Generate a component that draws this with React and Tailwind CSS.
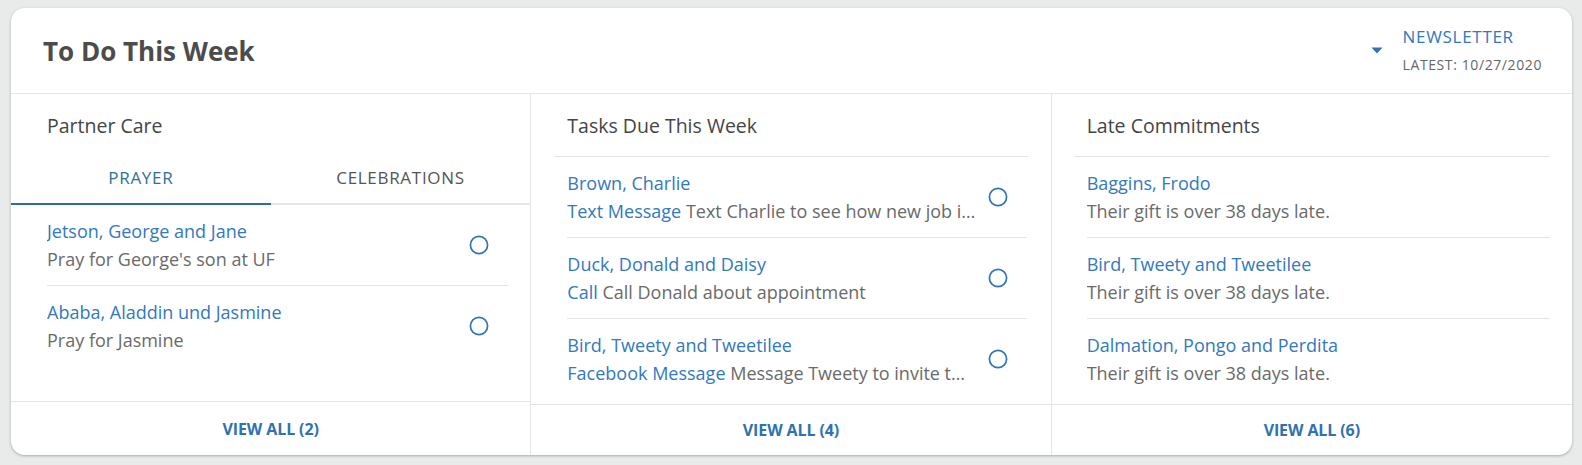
import React from 'react';

const FONT = { fontFamily: '"Open Sans", Lato, sans-serif' };

const prayers = [
  { name: 'Jetson, George and Jane', note: "Pray for George's son at UF" },
  { name: 'Ababa, Aladdin und Jasmine', note: 'Pray for Jasmine' },
];

const tasks = [
  { name: 'Brown, Charlie', kind: 'Text Message', note: 'Text Charlie to see how new job is going this week' },
  { name: 'Duck, Donald and Daisy', kind: 'Call', note: 'Call Donald about appointment' },
  { name: 'Bird, Tweety and Tweetilee', kind: 'Facebook Message', note: 'Message Tweety to invite to dinner next week' },
];

const late = [
  { name: 'Baggins, Frodo' },
  { name: 'Bird, Tweety and Tweetilee' },
  { name: 'Dalmation, Pongo and Perdita' },
];

const Circle = () => (
  <svg width="20" height="20" viewBox="0 0 20 20" className="shrink-0">
    <circle cx="10" cy="10" r="8.6" fill="none" stroke="#2f74b5" strokeWidth="1.7" />
  </svg>
);

const ViewAll = ({ count, className }) => (
  <div className={`flex items-center justify-center border-t border-[#e4e4e4] ${className}`}>
    <span className="text-[16px] font-bold text-[#2f72b0] tracking-[-0.1px]">VIEW ALL ({count})</span>
  </div>
);

const Row = ({ name, children, check, last }) => (
  <div className={`flex items-center gap-3 pt-3 pb-3 pr-[19px] ${last ? '' : 'border-b border-[#e4e4e4]'}`}>
    <div className="min-w-0 flex-1">
      <div className="text-[18px] leading-[28px] text-[#3279bd] truncate">{name}</div>
      <div className="text-[18px] leading-[28px] text-[#6a6a6a] truncate">{children}</div>
    </div>
    {check && <Circle />}
  </div>
);

export default function App() {
  return (
    <div className="min-h-screen bg-[#e9ebeb] pt-2 pl-[11px] pr-[10px]" style={FONT}>
      <div className="bg-white rounded-[14px] shadow-[0_1px_3px_rgba(0,0,0,0.28)] overflow-hidden h-[447px] flex flex-col">

        {/* Header */}
        <div className="h-[86px] shrink-0 border-b border-[#e4e4e4] flex items-center justify-between pl-[32px] pr-[30px]">
          <h1 className="text-[26px] font-bold text-[#4c4c4c] tracking-[0px] pt-[1px]">To Do This Week</h1>
          <div className="flex items-center gap-[20px]">
            <svg width="12" height="7" viewBox="0 0 12 7">
              <path d="M0.5 0.5 H11.5 L6 6.5 Z" fill="#2f74b5" />
            </svg>
            <div>
              <div className="text-[17px] leading-[20px] text-[#3279bd] tracking-[0.7px]">NEWSLETTER</div>
              <div className="text-[14px] leading-[20px] mt-[8px] text-[#666] tracking-[0.6px]">LATEST: 10/27/2020</div>
            </div>
          </div>
        </div>

        <div className="grid grid-cols-3 flex-1 min-h-0">

          {/* Partner Care */}
          <div className="flex flex-col border-r border-[#e4e4e4] min-h-0">
            <div className="h-[62px] shrink-0 flex items-center pt-[2px] pl-[36px] text-[19.5px] text-[#454545]">Partner Care</div>
            <div className="flex h-[49px] shrink-0">
              <div className="flex-1 flex items-center justify-center border-b-2 border-[#2d6e92] text-[17px] tracking-[0.7px] text-[#2f7196] pb-[3px]">PRAYER</div>
              <div className="flex-1 flex items-center justify-center border-b-2 border-[#e6e6e6] text-[17px] tracking-[0.7px] text-[#555] pb-[3px]">CELEBRATIONS</div>
            </div>
            <div className="flex-1 min-h-0 ml-[36px] mr-[22px]">
              {prayers.map((p, i) => (
                <Row key={p.name} name={p.name} check last={i === prayers.length - 1}>{p.note}</Row>
              ))}
            </div>
            <ViewAll count={2} className="h-[54px] shrink-0" />
          </div>

          {/* Tasks Due This Week */}
          <div className="flex flex-col border-r border-[#e4e4e4] min-h-0">
            <div className="mx-[23px] h-[63px] shrink-0 flex items-center pt-[1px] pl-[13px] border-b border-[#e4e4e4] text-[19.5px] text-[#454545]">
              Tasks Due This Week
            </div>
            <div className="flex-1 min-h-0 ml-[36px] mr-[24px] overflow-hidden">
              {tasks.map((t, i) => (
                <Row key={t.name} name={t.name} check last={i === tasks.length - 1}>
                  <span className="text-[#3279bd]">{t.kind}</span> {t.note}
                </Row>
              ))}
            </div>
            <ViewAll count={4} className="h-[51px] shrink-0" />
          </div>

          {/* Late Commitments */}
          <div className="flex flex-col min-h-0">
            <div className="mx-[22px] h-[63px] shrink-0 flex items-center pt-[1px] pl-[13px] border-b border-[#e4e4e4] text-[19.5px] text-[#454545]">
              Late Commitments
            </div>
            <div className="flex-1 min-h-0 ml-[35px] mr-[22px] overflow-hidden">
              {late.map((l, i) => (
                <Row key={l.name} name={l.name} last={i === late.length - 1}>Their gift is over 38 days late.</Row>
              ))}
            </div>
            <ViewAll count={6} className="h-[51px] shrink-0" />
          </div>

        </div>
      </div>
    </div>
  );
}
